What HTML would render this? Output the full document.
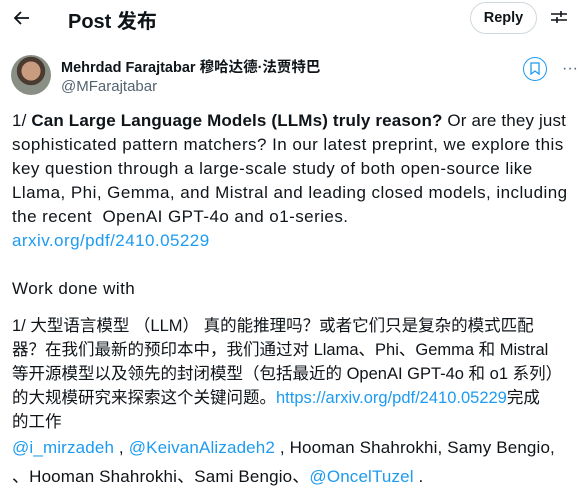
<!DOCTYPE html>
<html><head><meta charset="utf-8"><style>
body{margin:0;width:587px;height:486px;background:#fff;overflow:hidden;font-family:"Liberation Sans","Noto Sans CJK SC",sans-serif;color:#0f1419;position:relative}
.a{position:absolute;white-space:nowrap}
.l{font-size:17px;left:12px;letter-spacing:0.45px}
.c{font-size:16.5px;left:12px}
.b{color:#1d9bf0}
</style></head><body>
<svg class="a" style="left:12px;top:8px" width="20" height="20" viewBox="0 0 20 20"><path d="M17 10H4M9 4l-6 6 6 6" fill="none" stroke="#0f1419" stroke-width="1.8"/></svg>
<div class="a" style="left:68px;top:5px;font-size:20px;font-weight:bold">Post 发布</div>
<div class="a" style="left:470px;top:2px;width:65px;height:30px;border:1px solid #cfd9de;border-radius:16px;text-align:center;line-height:30px;font-weight:bold;font-size:14.5px">Reply</div>
<svg class="a" style="left:549px;top:7px" width="20" height="20" viewBox="0 0 20 20"><path d="M2 7h16M2 13h16M12 4v6M8 10v6" fill="none" stroke="#0f1419" stroke-width="1.6"/></svg>
<div class="a" style="left:11px;top:55px;width:40px;height:40px;border-radius:50%;background:radial-gradient(circle at 50% 40%,#c99c80 0 30%,#4a3a30 31% 45%,#8a8f86 46%)"></div>
<div class="a" style="left:61px;top:56px;font-size:14.5px;font-weight:bold">Mehrdad Farajtabar 穆哈达德·法贾特巴</div>
<div class="a" style="left:61px;top:78px;font-size:15px;color:#536471">@MFarajtabar</div>
<div class="a" style="left:523px;top:57px;width:22px;height:22px;border:1.5px solid #1d9bf0;border-radius:50%"></div>
<svg class="a" style="left:529px;top:62px" width="12" height="13" viewBox="0 0 12 13"><path d="M2 1h8v11l-4-3-4 3z" fill="none" stroke="#1d9bf0" stroke-width="1.3"/></svg>
<div class="a" style="left:562px;top:60px;font-size:16px;color:#536471">···</div>
<div class="a l" style="top:111px;letter-spacing:0.15px">1/ <b>Can Large Language Models (LLMs) truly reason?</b> Or are they just</div>
<div class="a l" style="top:135px">sophisticated pattern matchers? In our latest preprint, we explore this</div>
<div class="a l" style="top:159px">key question through a large-scale study of both open-source like</div>
<div class="a l" style="top:183px">Llama, Phi, Gemma, and Mistral and leading closed models, including</div>
<div class="a l" style="top:207px">the recent &nbsp;OpenAI GPT-4o and o1-series.</div>
<div class="a l b" style="top:231px">arxiv.org/pdf/2410.05229</div>
<div class="a l" style="top:279px">Work done with</div>
<div class="a c" style="top:312px">1/ 大型语言模型 （LLM） 真的能推理吗？或者它们只是复杂的模式匹配</div>
<div class="a c" style="top:336px">器？在我们最新的预印本中，我们通过对 Llama、Phi、Gemma 和 Mistral</div>
<div class="a c" style="top:360px">等开源模型以及领先的封闭模型（包括最近的 OpenAI GPT-4o 和 o1 系列）</div>
<div class="a c" style="top:384px">的大规模研究来探索这个关键问题。<span class="b">https://arxiv.org/pdf/2410.05229</span>完成</div>
<div class="a c" style="top:408px">的工作</div>
<div class="a l" style="top:438px;letter-spacing:0.15px"><span class="b">@i_mirzadeh</span> , <span class="b">@KeivanAlizadeh2</span> , Hooman Shahrokhi, Samy Bengio,</div>
<div class="a l" style="top:462px;letter-spacing:0.15px">、Hooman Shahrokhi、Sami Bengio、<span class="b">@OncelTuzel</span> .</div>
</body></html>
